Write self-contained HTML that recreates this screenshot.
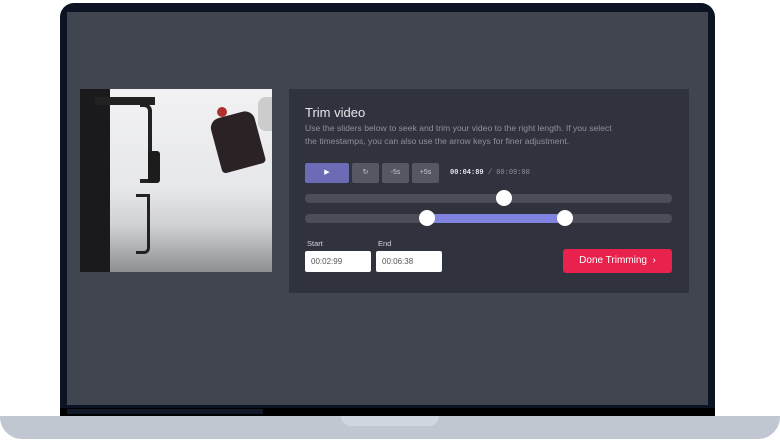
<!DOCTYPE html>
<html><head><style>
*{margin:0;padding:0;box-sizing:border-box}
body{width:780px;height:440px;background:#fff;position:relative;overflow:hidden;font-family:"Liberation Sans",sans-serif}
.bezel{position:absolute;left:60px;top:3px;width:655px;height:414px;background:#0c1322;border-radius:14px 14px 0 0}
.bot{position:absolute;left:60px;top:408px;width:655px;height:9px;background:#000}
.bot2{position:absolute;left:67px;top:409px;width:196px;height:5px;background:#111827}
.screen{position:absolute;left:67px;top:12px;width:641px;height:393px;background:#414550}
.base{position:absolute;left:0;top:416px;width:780px;height:23px;background:#c1c7d1;border-radius:0 0 22px 22px}
.notch{position:absolute;left:341px;top:416px;width:98px;height:10px;background:#d1d7e0;border-radius:0 0 10px 10px}
.video{position:absolute;left:80px;top:89px;width:192px;height:183px;background:linear-gradient(180deg,#f2f2f4 0%,#e6e7ea 55%,#cfd0d4 75%,#8d8f93 100%);overflow:hidden}
.panel{position:absolute;left:289px;top:89px;width:400px;height:204px;background:#30323d}
h1{position:absolute;left:16px;top:16px;font-size:13px;color:#e6e7ea;font-weight:normal}
.desc{position:absolute;left:16px;top:33px;width:312px;font-size:8.6px;line-height:13px;color:#8e909a}
.btn{position:absolute;top:74px;height:20px;border-radius:2px;background:#555862;color:#c8c9cd;font-size:7px;text-align:center;line-height:20px}
.time{position:absolute;left:161px;top:80px;font-family:"Liberation Mono",monospace;font-size:7px;color:#e4e4e7;font-weight:bold}
.time span{color:#8e909a;font-weight:normal}
.track{position:absolute;left:16px;width:367px;height:9px;border-radius:4px;background:#4b4e59}
.knob{position:absolute;width:16px;height:16px;border-radius:50%;background:#fff}
.lab{position:absolute;top:150px;font-size:7.5px;color:#d4d5d9}
.inp{position:absolute;top:162px;height:21px;background:#fff;border-radius:2px;font-size:8px;color:#555;line-height:21px;padding-left:6px}
.done{position:absolute;left:274px;top:160px;width:109px;height:24px;background:#e8214d;border-radius:3px;color:#fff;font-size:10px;line-height:24px;text-align:center}
</style></head><body>
<div class="bezel"></div><div class="bot"></div><div class="bot2"></div>
<div class="screen"></div>
<div class="base"></div><div class="notch"></div>
<div class="video">
<div style="position:absolute;left:0;top:0;width:30px;height:183px;background:#1a1a1c"></div>
<div style="position:absolute;left:15px;top:8px;width:60px;height:8px;background:#222"></div>
<div style="position:absolute;left:60px;top:14px;width:12px;height:80px;border:4px solid #222;border-left:none;border-radius:0 8px 0 0"></div>
<div style="position:absolute;left:68px;top:62px;width:12px;height:32px;background:#1c1c1c;border-radius:3px"></div>
<div style="position:absolute;left:56px;top:105px;width:14px;height:60px;border:3px solid #222;border-left:none;border-radius:0 0 6px 0"></div>
<div style="position:absolute;left:135px;top:25px;width:45px;height:55px;background:#2a2225;border-radius:10px 10px 4px 4px;transform:rotate(-15deg)"></div>
<div style="position:absolute;left:137px;top:18px;width:10px;height:10px;background:#b03030;border-radius:50%"></div>
<div style="position:absolute;left:178px;top:8px;width:20px;height:34px;background:#ccc;border-radius:8px 0 0 8px"></div>
</div>
<div class="panel">
<h1>Trim video</h1>
<div class="desc">Use the sliders below to seek and trim your video to the right length. If you select the timestamps, you can also use the arrow keys for finer adjustment.</div>
<div class="btn" style="left:16px;width:44px;background:#6c6bb6;color:#fff">▶</div>
<div class="btn" style="left:63px;width:27px">↻</div>
<div class="btn" style="left:93px;width:27px">-5s</div>
<div class="btn" style="left:123px;width:27px">+5s</div>
<div class="time">00:04:89 <span>/ 00:09:00</span></div>
<div class="track" style="top:105px"></div>
<div class="knob" style="left:207px;top:101px"></div>
<div class="track" style="top:125px"></div>
<div style="position:absolute;left:138px;top:125px;width:138px;height:9px;background:#8183e0"></div>
<div class="knob" style="left:130px;top:121px"></div>
<div class="knob" style="left:268px;top:121px"></div>
<div class="lab" style="left:18px">Start</div>
<div class="lab" style="left:89px">End</div>
<div class="inp" style="left:16px;width:66px">00:02:99</div>
<div class="inp" style="left:87px;width:66px">00:06:38</div>
<div class="done">Done Trimming &nbsp;›</div>
</div>
</body></html>
